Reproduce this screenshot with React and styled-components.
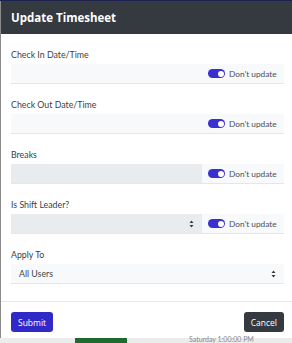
import React from 'react';
import styled, { createGlobalStyle } from 'styled-components';

const GlobalStyle = createGlobalStyle`
  html, body {
    margin: 0;
    padding: 0;
    background: #ececec;
  }
  body {
    font-family: Lato, 'Open Sans', 'Liberation Sans', sans-serif;
  }
`;

const Page = styled.div`
  width: 292px;
  height: 343px;
  overflow: hidden;
  display: flex;
  flex-direction: column;
  border-top: 1px solid #1d2150;
  box-sizing: border-box;
`;

const Modal = styled.div`
  width: 292px;
  height: 337px;
  flex: none;
  background: #fff;
  border-left: 1px solid #8c8c8c;
  box-sizing: border-box;
  display: flex;
  flex-direction: column;
`;

const Header = styled.div`
  height: 33px;
  background: #343a40;
  display: flex;
  align-items: center;
  padding: 0 10px;
  color: #fff;
  font-family: 'Open Sans', 'Liberation Sans', sans-serif;
  font-size: 11.5px;
  font-weight: 700;
`;

const Body = styled.div`
  flex: 1;
  padding: 14px 8px 0 10px;
  display: flex;
  flex-direction: column;
`;

const Label = styled.div`
  font-size: 8.8px;
  color: #3a3f44;
  height: 14px;
  line-height: 14px;
  margin-bottom: 2px;
`;

const Field = styled.div`
  height: 20px;
  display: flex;
  margin-bottom: 14px;
  border-bottom: 1.5px solid #e3e6ea;
  box-sizing: border-box;
`;

const Input = styled.div`
  flex: 1;
  background: ${(p) => (p.$disabled ? '#e9ecef' : '#f8f9fb')};
  display: flex;
  align-items: center;
  justify-content: flex-end;
  padding: 0 8px;
  font-size: 8.8px;
  color: #444;
`;

const Select = styled(Input)`
  justify-content: space-between;
`;

const Addon = styled.div`
  width: 82px;
  flex: none;
  background: #f8f9fb;
  display: flex;
  align-items: center;
  gap: 4px;
  padding-left: 6px;
  box-sizing: border-box;
`;

const Switch = styled.span`
  width: 17px;
  height: 9px;
  border-radius: 5px;
  background: #3a2fd0;
  position: relative;
  flex: none;
  &::after {
    content: '';
    position: absolute;
    right: 1.5px;
    top: 1.5px;
    width: 6px;
    height: 6px;
    border-radius: 50%;
    background: #fff;
  }
`;

const AddonText = styled.span`
  font-size: 8.3px;
  color: #4a4f55;
`;

const Footer = styled.div`
  border-top: 1px solid #e6e8eb;
  margin-top: auto;
  padding: 10px 8px 6px 10px;
  display: flex;
  align-items: center;
  justify-content: space-between;
`;

const Button = styled.button`
  height: 20px;
  border: none;
  border-radius: 3px;
  padding: 0 7px;
  font-family: 'Open Sans', 'Liberation Sans', sans-serif;
  font-size: 8.5px;
  color: #fff;
  background: ${(p) => (p.$variant === 'dark' ? '#343a40' : '#3128c8')};
`;

const Under = styled.div`
  flex: 1;
  display: flex;
  align-items: center;
  padding-left: 75px;
  gap: 62px;
`;

const GreenBlock = styled.div`
  width: 52px;
  height: 6px;
  align-self: flex-start;
  background: #1e6b2d;
`;

const UnderText = styled.span`
  font-size: 7px;
  color: #888;
  align-self: flex-start;
  margin-top: -3px;
`;

const Arrows = () => (
  <svg width="5" height="8" viewBox="0 0 5 8">
    <path d="M2.5 0.5 L4.5 3 H0.5 Z M2.5 7.5 L4.5 5 H0.5 Z" fill="#343a40" />
  </svg>
);

const DontUpdate = () => (
  <Addon>
    <Switch />
    <AddonText>Don't update</AddonText>
  </Addon>
);

export default function App() {
  return (
    <>
      <GlobalStyle />
      <Page>
        <Modal>
          <Header>Update Timesheet</Header>
          <Body>
            <Label>Check In Date/Time</Label>
            <Field>
              <Input />
              <DontUpdate />
            </Field>

            <Label>Check Out Date/Time</Label>
            <Field>
              <Input />
              <DontUpdate />
            </Field>

            <Label>Breaks</Label>
            <Field>
              <Input $disabled />
              <DontUpdate />
            </Field>

            <Label>Is Shift Leader?</Label>
            <Field>
              <Select $disabled>
                <span />
                <Arrows />
              </Select>
              <DontUpdate />
            </Field>

            <Label>Apply To</Label>
            <Field>
              <Select>
                <span>All Users</span>
                <Arrows />
              </Select>
            </Field>
          </Body>
          <Footer>
            <Button>Submit</Button>
            <Button $variant="dark">Cancel</Button>
          </Footer>
        </Modal>
        <Under>
          <GreenBlock />
          <UnderText>Saturday 1:00:00 PM</UnderText>
        </Under>
      </Page>
    </>
  );
}
